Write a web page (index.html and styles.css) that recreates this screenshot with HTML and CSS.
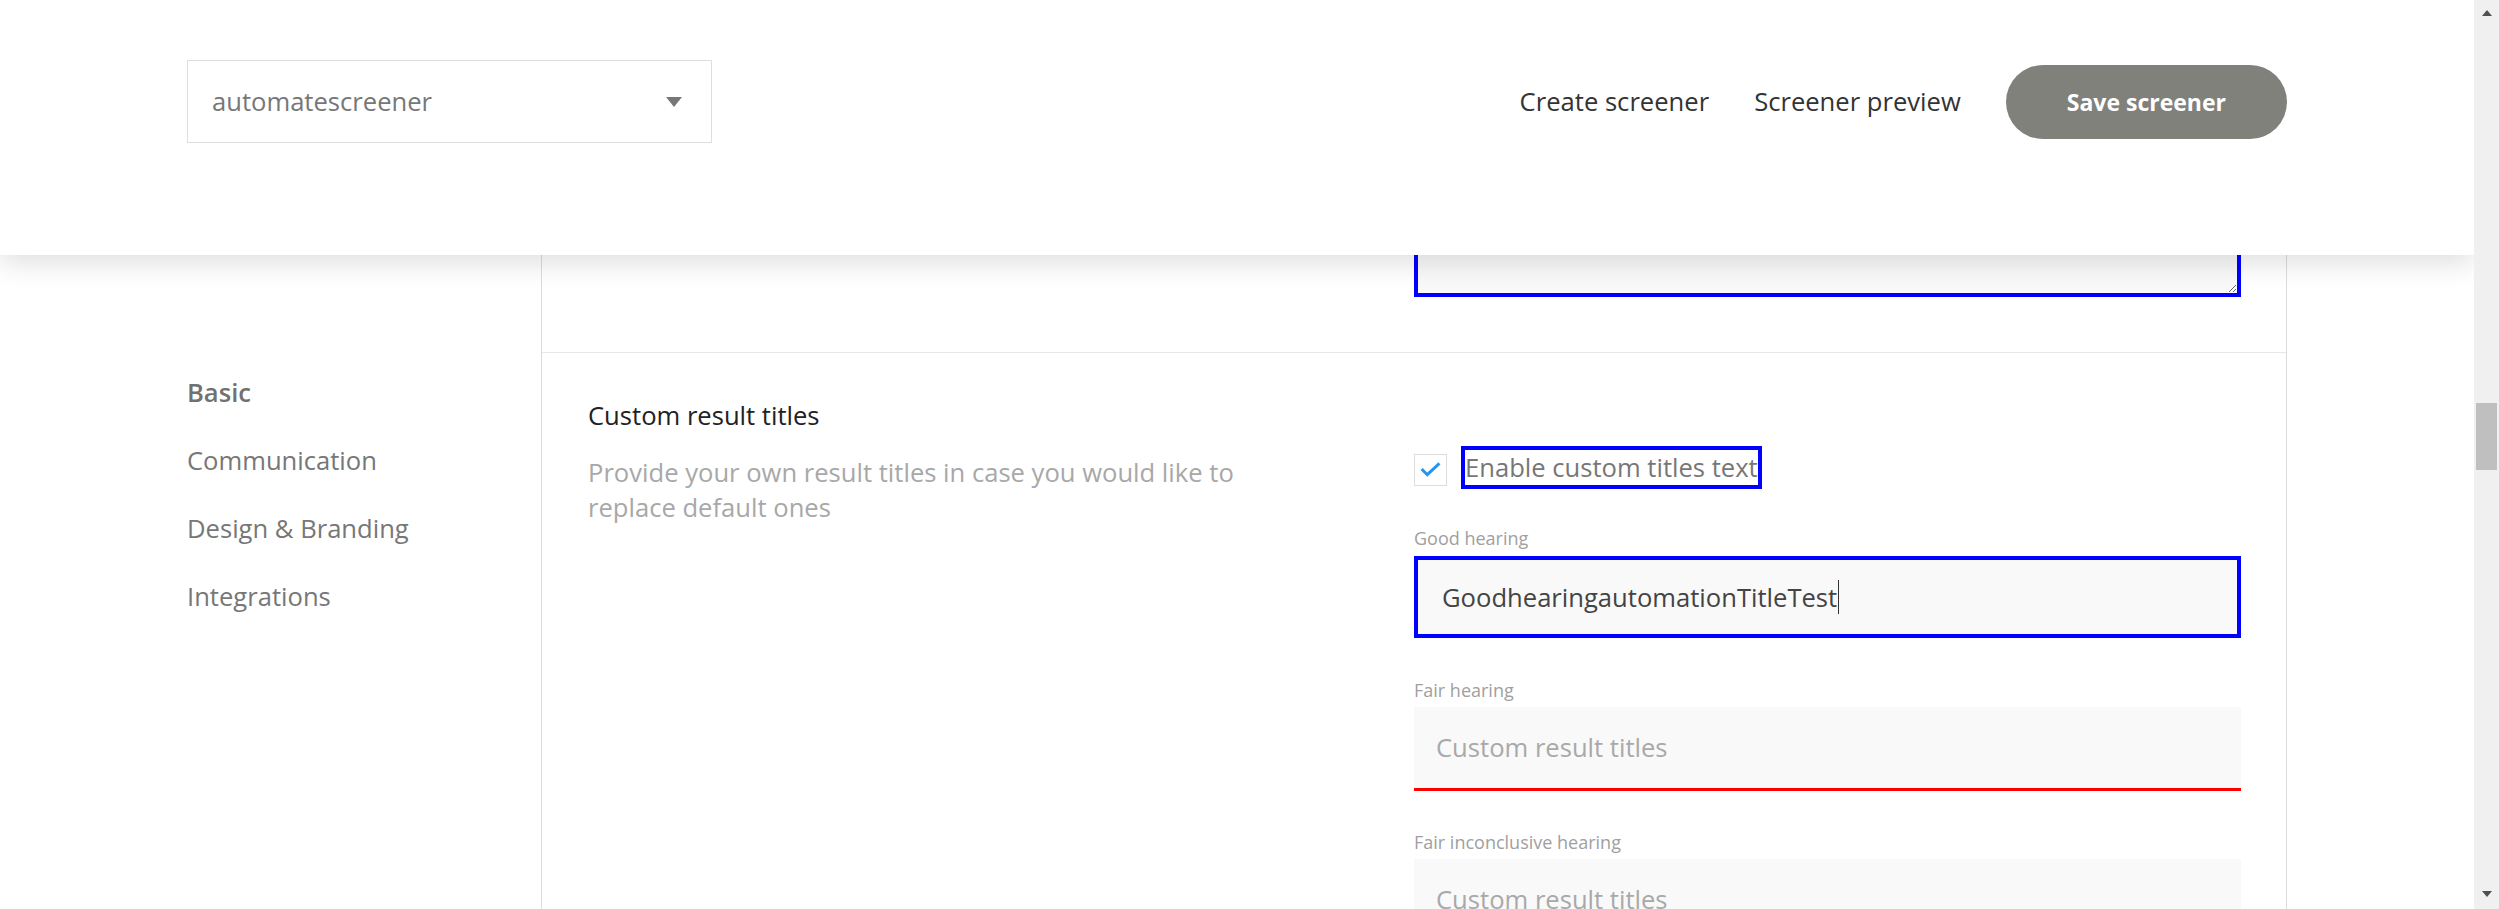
FILE: index.html
```html
<!DOCTYPE html>
<html lang="en">
<head>
<meta charset="utf-8">
<title>Screener settings</title>
<link rel="stylesheet" href="styles.css">
</head>
<body>
<div class="screen">
  <div class="viewport">
    <header class="topbar">
      <div class="topbar-inner">
        <div class="select">
          <span class="select-value">automatescreener</span>
          <span class="select-caret"></span>
        </div>
        <nav class="actions">
          <a class="action-link">Create screener</a>
          <a class="action-link">Screener preview</a>
          <button class="save-btn">Save screener</button>
        </nav>
      </div>
    </header>

    <div class="layout">
      <aside class="sidebar">
        <div class="side-item active">Basic</div>
        <div class="side-item">Communication</div>
        <div class="side-item">Design &amp; Branding</div>
        <div class="side-item">Integrations</div>
      </aside>

      <main class="card">
        <section class="section section-prev">
          <div class="info"></div>
          <div class="fields">
            <textarea class="textarea"></textarea>
          </div>
        </section>

        <section class="section section-titles">
          <div class="info">
            <h2 class="info-title">Custom result titles</h2>
            <p class="info-desc">Provide your own result titles in case you would like to replace default ones</p>
          </div>
          <div class="fields fields-titles">
            <div class="check-row">
              <span class="checkbox">
                <svg viewBox="0 0 32 32" width="30" height="30"><polyline points="6,15 12,21 25,9" fill="none" stroke="#2196f3" stroke-width="3.2" stroke-linecap="butt" stroke-linejoin="miter"/></svg>
              </span>
              <span class="check-label">Enable custom titles text</span>
            </div>

            <div class="field">
              <div class="field-label">Good hearing</div>
              <div class="input input-focused">GoodhearingautomationTitleTest<span class="text-caret"></span></div>
            </div>

            <div class="field">
              <div class="field-label">Fair hearing</div>
              <input class="input input-error" type="text" placeholder="Custom result titles">
            </div>

            <div class="field field-last">
              <div class="field-label">Fair inconclusive hearing</div>
              <input class="input input-error" type="text" placeholder="Custom result titles">
            </div>
          </div>
        </section>
      </main>
    </div>
  </div>

  <div class="scrollbar">
    <div class="sb-btn sb-up"><span class="sb-arrow-up"></span></div>
    <div class="sb-track"><div class="sb-thumb"></div></div>
    <div class="sb-btn sb-down"><span class="sb-arrow-down"></span></div>
  </div>
</div>
</body>
</html>
```

FILE: styles.css
```css
html, body {
  margin: 0;
  padding: 0;
  height: 909px;
  overflow: hidden;
  background: #ffffff;
}

body {
  font-family: "Open Sans", "Noto Sans", "Liberation Sans", sans-serif;
  font-size: 25.6px;
  color: #333333;
}

.screen {
  display: flex;
  height: 909px;
}

.viewport {
  flex: 1;
  position: relative;
  overflow: hidden;
  height: 909px;
}

/* ---------- header ---------- */
.topbar {
  position: absolute;
  top: 0;
  left: 0;
  right: 0;
  height: 255px;
  background: #ffffff;
  box-shadow: 0 8px 26px rgba(0, 0, 0, 0.13);
  z-index: 10;
}

.topbar-inner {
  width: 2100px;
  margin: 0 auto;
  padding-top: 60px;
  display: flex;
  justify-content: space-between;
  align-items: flex-start;
}

.select {
  box-sizing: border-box;
  width: 525px;
  height: 83px;
  border: 1px solid #dedede;
  padding: 0 29px 0 24px;
  display: flex;
  align-items: center;
  justify-content: space-between;
  color: #777777;
}

.select-caret {
  width: 0;
  height: 0;
  border-left: 8.5px solid transparent;
  border-right: 8.5px solid transparent;
  border-top: 10px solid #777777;
}

.actions {
  height: 83px;
  display: flex;
  align-items: center;
  gap: 45px;
}

.action-link {
  color: #333333;
  text-decoration: none;
}

.save-btn {
  height: 74px;
  padding: 0 61px;
  border: none;
  border-radius: 37px;
  background: #81817c;
  color: #ffffff;
  font-family: "Open Sans", "Noto Sans", "Liberation Sans", sans-serif;
  font-size: 23px;
  font-weight: 700;
}

/* ---------- layout ---------- */
.layout {
  width: 2100px;
  margin: 0 auto;
  display: grid;
  grid-template-columns: 354px 1fr;
  height: 909px;
}

.sidebar {
  padding-top: 375px;
}

.side-item {
  color: #777777;
  line-height: 36px;
  margin-bottom: 32px;
}

.side-item.active {
  font-weight: 600;
  color: #717171;
}

.card {
  border-left: 1px solid #dcdcdc;
  border-right: 1px solid #dcdcdc;
}

.section {
  display: grid;
  grid-template-columns: 1fr 827px;
  padding: 0 45px 0 46px;
  align-items: start;
}

.section-prev {
  padding-top: 46px;
  padding-bottom: 55px;
}

.textarea {
  display: block;
  box-sizing: border-box;
  width: 827px;
  height: 251px;
  border: 4px solid #0000ff;
  background: #f9f9f9;
  margin: 0;
  outline: none;
  font-family: inherit;
}

.section-titles {
  border-top: 1px solid #e6e6e6;
  padding-top: 45px;
}

.info-title {
  margin: 0;
  font-size: 25.6px;
  font-weight: 400;
  line-height: 36px;
  color: #222222;
}

.info-desc {
  margin: 21px 0 0;
  max-width: 700px;
  line-height: 35px;
  color: #a8a8a8;
}

/* ---------- fields ---------- */
.fields-titles {
  padding-top: 52px;
}

.check-row {
  display: flex;
  align-items: flex-start;
  gap: 18px;
}

.checkbox {
  box-sizing: border-box;
  width: 33px;
  height: 32px;
  margin-top: 4px;
  border: 1px solid #dddddd;
  background: #ffffff;
  display: flex;
  align-items: center;
  justify-content: center;
}

.checkbox svg {
  display: block;
}

.check-label {
  color: #777777;
  line-height: 35px;
  outline: 4px solid #0000ff;
}

.field {
  margin-top: 40px;
}

.field-last {
  margin-top: 39px;
}

.field-label {
  font-size: 18px;
  line-height: 24px;
  color: #a0a0a0;
  margin-bottom: 5px;
}

.input {
  display: flex;
  align-items: center;
  box-sizing: border-box;
  width: 100%;
  height: 84px;
  margin: 0;
  padding: 0 22px;
  border: none;
  background: #f9f9f9;
  font-family: "Open Sans", "Noto Sans", "Liberation Sans", sans-serif;
  font-size: 25.6px;
  color: #444444;
  outline: none;
}

.input::placeholder {
  color: #a9a9a9;
}

.input-error {
  border-bottom: 3px solid #ff0000;
}

.input-focused {
  height: 82px;
  border: 4px solid #0000ff;
  padding-left: 24px;
  margin-top: 6px;
}

.text-caret {
  display: inline-block;
  width: 1px;
  height: 34px;
  background: #333333;
  margin-left: 1px;
}

/* ---------- scrollbar ---------- */
.scrollbar {
  width: 25px;
  height: 909px;
  background: #f0f0f0;
  display: flex;
  flex-direction: column;
}

.sb-btn {
  display: flex;
  align-items: center;
  justify-content: center;
}

.sb-up {
  height: 26px;
}

.sb-down {
  height: 30px;
}

.sb-track {
  flex: 1;
}

.sb-thumb {
  margin: 377px 2px 0;
  height: 67px;
  background: #bfbfbf;
}

.sb-arrow-up {
  width: 0;
  height: 0;
  border-left: 5.5px solid transparent;
  border-right: 5.5px solid transparent;
  border-bottom: 6px solid #505050;
}

.sb-arrow-down {
  width: 0;
  height: 0;
  border-left: 5.5px solid transparent;
  border-right: 5.5px solid transparent;
  border-top: 6px solid #505050;
}
```
